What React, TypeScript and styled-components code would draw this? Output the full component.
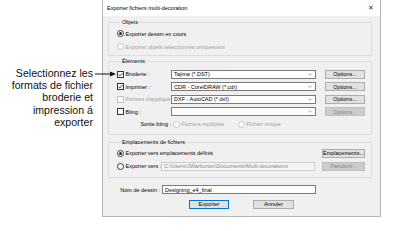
import styled, { createGlobalStyle } from "styled-components";

const GlobalStyle = createGlobalStyle`
  html, body { margin: 0; padding: 0; background: #ffffff; }
  body {
    width: 394px;
    height: 231px;
    overflow: hidden;
    font-family: "Liberation Sans", Arial, sans-serif;
  }
  * { box-sizing: border-box; }
`;

const Page = styled.div`
  display: flex;
  align-items: flex-start;
  position: relative;
`;

const Callout = styled.div`
  width: 93px;
  padding-top: 67px;
  text-align: right;
  font-size: 10.6px;
  line-height: 12.2px;
  color: #111;
`;

const Arrow = styled.svg`
  position: absolute;
  left: 94px;
  top: 70px;
`;

const Dialog = styled.div`
  margin-left: 9px;
  width: 279px;
  height: 217px;
  border: 1px solid #b4b4b4;
  border-top: none;
  background: #f0f0f0;
  display: flex;
  flex-direction: column;
  font-size: 5.5px;
  color: #000;
`;

const TitleBar = styled.div`
  height: 16px;
  background: #fff;
  display: flex;
  align-items: center;
  justify-content: space-between;
  padding: 0 6px 0 4px;
`;

const Close = styled.span`
  font-size: 7px;
  color: #333;
`;

const Body = styled.div`
  padding: 3px 8px 0 5px;
  display: flex;
  flex-direction: column;
`;

const Group = styled.fieldset<{ $top: number; $pt: number; $pb: number }>`
  margin: ${(p) => p.$top}px 0 0 0;
  padding: ${(p) => p.$pt}px 6px ${(p) => p.$pb}px 8px;
  border: 1px solid #dddddd;
  min-width: 0;
`;

const Legend = styled.legend`
  padding: 0 1px;
  margin-left: 4px;
  line-height: 7px;
  font-size: 5.5px;
`;

const Row = styled.div<{ $h: number }>`
  height: ${(p) => p.$h}px;
  display: flex;
  align-items: center;
`;

const Option = styled.label<{ $off?: boolean; $w?: number }>`
  display: flex;
  align-items: center;
  gap: 1.5px;
  color: ${(p) => (p.$off ? "#a0a0a0" : "#000")};
  width: ${(p) => (p.$w ? `${p.$w}px` : "auto")};
  flex-shrink: 0;
  white-space: nowrap;
`;

const RadioDot = styled.span<{ $on?: boolean; $off?: boolean }>`
  width: 7px;
  height: 7px;
  border-radius: 50%;
  border: 1px solid ${(p) => (p.$off ? "#c4c4c4" : "#333")};
  background: #fff;
  display: inline-flex;
  align-items: center;
  justify-content: center;
  flex-shrink: 0;
  &::after {
    content: "";
    width: 3px;
    height: 3px;
    border-radius: 50%;
    background: ${(p) => (p.$on ? "#222" : "transparent")};
  }
`;

const Check = styled.span<{ $off?: boolean }>`
  width: 7px;
  height: 7px;
  border: 1px solid ${(p) => (p.$off ? "#c4c4c4" : "#333")};
  background: #fff;
  display: inline-flex;
  align-items: center;
  justify-content: center;
  flex-shrink: 0;
`;

const Field = styled.div<{ $w: number; $off?: boolean }>`
  width: ${(p) => p.$w}px;
  height: 9px;
  border: 1px solid ${(p) => (p.$off ? "#cccccc" : "#7a7a7a")};
  background: ${(p) => (p.$off ? "#f4f4f4" : "#fff")};
  color: ${(p) => (p.$off ? "#8a8a8a" : "#000")};
  display: flex;
  align-items: center;
  justify-content: space-between;
  padding: 0 3px 0 2px;
  white-space: nowrap;
  overflow: hidden;
  flex-shrink: 0;
`;

const Btn = styled.div<{ $w: number; $off?: boolean; $def?: boolean; $push?: boolean }>`
  width: ${(p) => p.$w}px;
  height: 9px;
  margin-left: ${(p) => (p.$push ? "auto" : "0")};
  border: 1px solid ${(p) => (p.$def ? "#0078d7" : p.$off ? "#bfbfbf" : "#adadad")};
  background: ${(p) => (p.$off ? "#cccccc" : "#e1e1e1")};
  color: ${(p) => (p.$off ? "#838383" : "#000")};
  display: flex;
  align-items: center;
  justify-content: center;
  flex-shrink: 0;
`;

const SideLabel = styled.span<{ $w: number }>`
  width: ${(p) => p.$w}px;
  text-align: right;
  flex-shrink: 0;
  padding-right: 2px;
`;

const Footer = styled.div`
  margin-top: 5px;
  height: 10px;
  display: flex;
  justify-content: center;
  gap: 24px;
  padding-left: 3px;
`;

const Chevron = () => (
  <svg width="4" height="3" viewBox="0 0 4 3">
    <path d="M0.3 0.6 L2 2.3 L3.7 0.6" fill="none" stroke="#606060" strokeWidth="0.6" />
  </svg>
);

const Tick = () => (
  <svg width="5" height="5" viewBox="0 0 5 5">
    <path d="M0.5 2.6 L1.9 4 L4.5 1" fill="none" stroke="#222" strokeWidth="0.8" />
  </svg>
);

const formats = [
  { label: "Broderie :", value: "Tajima (*.DST)", checked: true },
  { label: "Imprimer :", value: "CDR - CorelDRAW (*.cdr)", checked: true },
  { label: "Formes d'appliqué :", value: "DXF - AutoCAD (*.dxf)", checked: false, off: true },
  { label: "Bling :", value: "", checked: false, btnOff: true },
];

export default function App() {
  return (
    <>
      <GlobalStyle />
      <Page>
        <Callout>
          Selectionnez les
          <br />
          formats de fichier
          <br />
          broderie et
          <br />
          impression á
          <br />
          exporter
        </Callout>
        <Arrow width="24" height="8" viewBox="0 0 24 8">
          <line x1="1" y1="4" x2="18" y2="4" stroke="#111" strokeWidth="1" />
          <path d="M16 1.5 L22 4 L16 6.5 Z" fill="#111" />
        </Arrow>
        <Dialog>
          <TitleBar>
            <span>Exporter fichiers multi-decoration</span>
            <Close>✕</Close>
          </TitleBar>
          <Body>
            <Group $top={0} $pt={1} $pb={2}>
              <Legend>Objets</Legend>
              <Row $h={13}>
                <Option>
                  <RadioDot $on />
                  Exporter dessin en cours
                </Option>
              </Row>
              <Row $h={13}>
                <Option $off>
                  <RadioDot $off />
                  Exporter objets sélectionnés uniquement
                </Option>
              </Row>
            </Group>

            <Group $top={2} $pt={3} $pb={3}>
              <Legend>Éléments</Legend>
              {formats.map((f) => (
                <Row $h={12.5} key={f.label}>
                  <Option $w={54} $off={f.off}>
                    <Check $off={f.off}>{f.checked && <Tick />}</Check>
                    {f.label}
                  </Option>
                  <Field $w={145}>
                    <span>{f.value}</span>
                    <Chevron />
                  </Field>
                  <Btn $w={40} $off={f.btnOff} $push>
                    Options...
                  </Btn>
                </Row>
              ))}
              <Row $h={12.5}>
                <SideLabel $w={56}>Sortie bling :</SideLabel>
                <Option $off $w={65}>
                  <RadioDot $off />
                  Fichiers multiples
                </Option>
                <Option $off>
                  <RadioDot $off />
                  Fichier unique
                </Option>
              </Row>
            </Group>

            <Group $top={4} $pt={1} $pb={4}>
              <Legend>Emplacements de fichiers</Legend>
              <Row $h={13}>
                <Option>
                  <RadioDot $on />
                  Exporter vers emplacements définis
                </Option>
                <Btn $w={43} $push>
                  Emplacements...
                </Btn>
              </Row>
              <Row $h={13}>
                <Option $w={44}>
                  <RadioDot />
                  Exporter vers :
                </Option>
                <Field $w={154} $off>
                  <span>C:\Users\JWarburton\Documents\Multi-decorations</span>
                </Field>
                <Btn $w={43} $off $push>
                  Parcourir...
                </Btn>
              </Row>
            </Group>

            <Row $h={10} style={{ marginTop: 7 }}>
              <SideLabel $w={54}>Nom de dessin :</SideLabel>
              <Field $w={154}>
                <span>Designing_e4_final</span>
              </Field>
            </Row>

            <Footer>
              <Btn $w={40} $def>
                Exporter
              </Btn>
              <Btn $w={41}>Annuler</Btn>
            </Footer>
          </Body>
        </Dialog>
      </Page>
    </>
  );
}
